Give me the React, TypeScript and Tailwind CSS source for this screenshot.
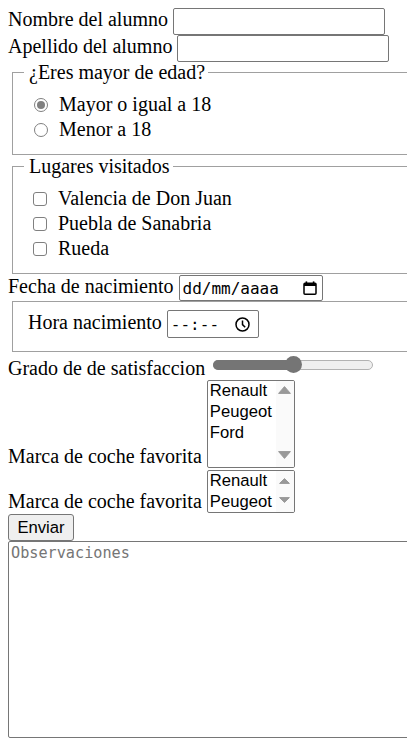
import React from "react";

function Radio({ checked, label }: { checked?: boolean; label: string }) {
  return (
    <div className="flex items-center h-[25px]">
      <span className="w-[14px] h-[14px] shrink-0 rounded-full border border-[#808080] bg-white flex items-center justify-center mr-[11px]">
        {checked ? <span className="w-[8px] h-[8px] rounded-full bg-[#808080]" /> : null}
      </span>
      <span className="whitespace-nowrap">{label}</span>
    </div>
  );
}

function Check({ label }: { label: string }) {
  return (
    <div className="flex items-center h-[25px]">
      <span className="w-[14px] h-[14px] shrink-0 rounded-[3px] border border-[#808080] bg-white mr-[11px]" />
      <span className="whitespace-nowrap">{label}</span>
    </div>
  );
}

function Up({ w, h }: { w: number; h: number }) {
  return (
    <svg width={w} height={h} viewBox={`0 0 ${w} ${h}`}>
      <path
        d={`M${w / 2} 0.6 L${w - 0.6} ${h - 0.6} H0.6 Z`}
        fill="#999999"
        stroke="#999999"
        strokeWidth="1"
        strokeLinejoin="round"
      />
    </svg>
  );
}

function Down({ w, h }: { w: number; h: number }) {
  return (
    <svg width={w} height={h} viewBox={`0 0 ${w} ${h}`}>
      <path
        d={`M0.6 0.6 H${w - 0.6} L${w / 2} ${h - 0.6} Z`}
        fill="#999999"
        stroke="#999999"
        strokeWidth="1"
        strokeLinejoin="round"
      />
    </svg>
  );
}

export default function App() {
  return (
    <div className="w-[407px] h-[738px] overflow-hidden bg-white text-black font-['Liberation_Serif','Times_New_Roman',serif] text-[20px] leading-[23px] pt-[8px] pl-[8px]">
      {/* Nombre */}
      <div className="flex items-start gap-[5px] h-[27px]">
        <span className="whitespace-nowrap">Nombre del alumno</span>
        <div className="w-[212px] h-[27px] shrink-0 border border-[#767676] rounded-[2px] bg-white" />
      </div>
      {/* Apellido */}
      <div className="flex items-start gap-[5px] h-[27px]">
        <span className="whitespace-nowrap">Apellido del alumno</span>
        <div className="w-[212px] h-[27px] shrink-0 border border-[#767676] rounded-[2px] bg-white" />
      </div>

      {/* Mayor de edad */}
      <fieldset className="ml-[4px] w-[420px] border border-[#a0a0a0] pl-[11px] pb-[12px]">
        <legend className="pl-[5px] pr-[3px] leading-[20px] whitespace-nowrap">¿Eres mayor de edad?</legend>
        <div className="pt-[10px] pl-[10px]">
          <Radio checked label="Mayor o igual a 18" />
          <Radio label="Menor a 18" />
        </div>
      </fieldset>

      {/* Lugares */}
      <fieldset className="mt-[1px] ml-[4px] w-[420px] border border-[#a0a0a0] pl-[11px] pb-[12px]">
        <legend className="pl-[5px] pr-[3px] leading-[20px] whitespace-nowrap">Lugares visitados</legend>
        <div className="pt-[10px] pl-[9px]">
          <Check label="Valencia de Don Juan" />
          <Check label="Puebla de Sanabria" />
          <Check label="Rueda" />
        </div>
      </fieldset>

      {/* Fecha */}
      <div className="mt-[1px] flex items-start gap-[5px] h-[26px]">
        <span className="whitespace-nowrap">Fecha de nacimiento</span>
        <div className="w-[144px] h-[26px] shrink-0 border border-[#767676] rounded-[2px] bg-white flex items-center justify-between pl-[3px] pr-[5px] font-['DejaVu_Sans_Mono',monospace] text-[16px] leading-[19px]">
          <span>dd/mm/aaaa</span>
          <svg width="14" height="14" viewBox="0 0 14 14">
            <rect x="1" y="2.2" width="12" height="11" rx="1" fill="none" stroke="#000" strokeWidth="1.5" />
            <rect x="1" y="2.2" width="12" height="2.8" fill="#000" />
            <rect x="2.6" y="0.4" width="1.6" height="2.4" fill="#000" />
            <rect x="9.8" y="0.4" width="1.6" height="2.4" fill="#000" />
          </svg>
        </div>
      </div>

      {/* Hora */}
      <fieldset className="ml-[4px] w-[420px] border border-[#a0a0a0] pt-[8px] pb-[13px] pl-[15px]">
        <div className="flex items-start gap-[5px] h-[28px]">
          <span className="whitespace-nowrap pt-[1px]">Hora nacimiento</span>
          <div className="w-[92px] h-[28px] shrink-0 border border-[#767676] rounded-[2px] bg-white flex items-center justify-between pl-[3px] pr-[8px] font-['DejaVu_Sans_Mono',monospace] text-[16px] leading-[19px]">
            <span>--:--</span>
            <svg width="15" height="15" viewBox="0 0 15 15">
              <circle cx="7.5" cy="7.5" r="6.5" fill="none" stroke="#000" strokeWidth="1.5" />
              <path d="M7.5 3.6 V7.6 L10.2 10.3" fill="none" stroke="#000" strokeWidth="1.5" />
            </svg>
          </div>
        </div>
      </fieldset>

      {/* Satisfaccion */}
      <div className="flex items-start gap-[5px] h-[28px]">
        <span className="whitespace-nowrap mt-[5px]">Grado de de satisfaccion</span>
        <div className="relative shrink-0 w-[160px] h-[17px] mt-[4px] ml-[3px] flex items-center">
          <div className="relative w-full h-[10px]">
            <div className="absolute inset-0 rounded-full border border-[#b2b2b2] bg-[#efefef]" />
            <div className="absolute left-0 top-0 h-full w-[84px] rounded-full bg-[#757575]" />
          </div>
          <div className="absolute left-[71.5px] top-0 w-[17px] h-[17px] rounded-full bg-[#757575]" />
        </div>
      </div>

      {/* Marca 1 */}
      <div className="flex items-end gap-[5px] h-[88px]">
        <span className="whitespace-nowrap">Marca de coche favorita</span>
        <div className="flex shrink-0 w-[88px] h-[88px] border border-[#767676] rounded-[2px] bg-white overflow-hidden font-['Liberation_Sans',Arial,sans-serif] text-[16.67px] leading-[19px]">
          <div className="flex-1 pl-[2px]">
            <div className="h-[20.8px] whitespace-nowrap">Renault</div>
            <div className="h-[20.8px] whitespace-nowrap">Peugeot</div>
            <div className="h-[20.8px] whitespace-nowrap">Ford</div>
          </div>
          <div className="w-[18px] bg-[#fafafa] flex flex-col items-center justify-between pt-[5px] pb-[8px]">
            <Up w={13} h={8} />
            <Down w={13} h={8} />
          </div>
        </div>
      </div>

      {/* Marca 2 */}
      <div className="flex items-end gap-[5px] h-[45px]">
        <span className="whitespace-nowrap">Marca de coche favorita</span>
        <div className="flex shrink-0 w-[88px] h-[43px] border border-[#767676] rounded-[2px] bg-white overflow-hidden font-['Liberation_Sans',Arial,sans-serif] text-[16.67px] leading-[19px]">
          <div className="flex-1 pl-[2px]">
            <div className="h-[20.5px] whitespace-nowrap">Renault</div>
            <div className="h-[20.5px] whitespace-nowrap">Peugeot</div>
          </div>
          <div className="w-[18px] bg-[#fafafa] flex flex-col items-center justify-between pt-[7px] pb-[9px]">
            <Up w={11} h={6} />
            <Down w={11} h={6} />
          </div>
        </div>
      </div>

      {/* Enviar */}
      <div className="mt-[1px] w-[66px] h-[27px] border border-[#767676] rounded-[3px] bg-[#efefef] flex items-center justify-center font-['Liberation_Sans',Arial,sans-serif] text-[16.67px] leading-[19px]">
        Enviar
      </div>

      {/* Observaciones */}
      <div className="w-[420px] h-[197px] border border-[#767676] rounded-[2px] bg-white pl-[2px] pt-[2px] font-['DejaVu_Sans_Mono',monospace] text-[15.2px] leading-[18px] text-[#757575]">
        Observaciones
      </div>
    </div>
  );
}
